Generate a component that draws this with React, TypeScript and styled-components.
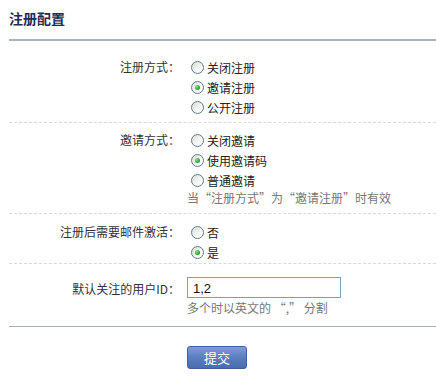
import styled, { createGlobalStyle } from "styled-components";

const GlobalStyle = createGlobalStyle`
  body {
    margin: 0;
    background: #fff;
    font-family: "Noto Sans CJK SC", "Noto Sans", sans-serif;
    font-size: 12px;
    color: #333;
  }
`;

interface IOption {
  label: string;
  checked?: boolean;
}

const regOptions: IOption[] = [
  { label: "关闭注册" },
  { label: "邀请注册", checked: true },
  { label: "公开注册" },
];

const inviteOptions: IOption[] = [
  { label: "关闭邀请" },
  { label: "使用邀请码", checked: true },
  { label: "普通邀请" },
];

const mailOptions: IOption[] = [{ label: "否" }, { label: "是", checked: true }];

const RadioGroup = ({ options }: { options: IOption[] }) => (
  <div>
    {options.map((o) => (
      <RadioRow key={o.label}>
        <RadioCircle $checked={!!o.checked} />
        {o.label}
      </RadioRow>
    ))}
  </div>
);

export default function App() {
  return (
    <Page lang="zh-CN">
      <GlobalStyle />
      <Title>注册配置</Title>
      <Section $top={16} $bottom={5}>
        <Label>注册方式：</Label>
        <RadioGroup options={regOptions} />
      </Section>
      <Section $top={7} $bottom={7}>
        <Label>邀请方式：</Label>
        <div>
          <RadioGroup options={inviteOptions} />
          <Note>当“注册方式”为“邀请注册”时有效</Note>
        </div>
      </Section>
      <Section $top={8} $bottom={1}>
        <Label>注册后需要邮件激活：</Label>
        <RadioGroup options={mailOptions} />
      </Section>
      <Section $top={13} $bottom={10} $last>
        <Label $tall>默认关注的用户ID：</Label>
        <div>
          <TextInput defaultValue="1,2" />
          <Note>多个时以英文的 “,” 分割</Note>
        </div>
      </Section>
      <Actions>
        <SubmitButton type="button">提交</SubmitButton>
      </Actions>
    </Page>
  );
}

const Page = styled.div`
  width: 427px;
  padding: 10px 0 0 9px;
`;

const Title = styled.div`
  font-size: 14px;
  font-weight: bold;
  line-height: 16px;
  color: #1f2d52;
  padding-bottom: 13px;
  border-bottom: 2px solid #a3b3c1;
`;

const Section = styled.div<{ $top: number; $bottom: number; $last?: boolean }>`
  display: grid;
  grid-template-columns: 171px 1fr;
  column-gap: 10px;
  padding: ${(p) => p.$top}px 0 ${(p) => p.$bottom}px;
  border-bottom: ${(p) => (p.$last ? "1px solid #a5adb5" : "1px dashed #d8d8d8")};
`;

const Label = styled.div<{ $tall?: boolean }>`
  text-align: right;
  line-height: ${(p) => (p.$tall ? "21px" : "18px")};
  margin-top: 1px;
  color: #333;
`;

const RadioRow = styled.div`
  display: flex;
  align-items: center;
  height: 20px;
  padding-left: 1px;
  color: #222;
`;

const RadioCircle = styled.span<{ $checked: boolean }>`
  position: relative;
  width: 11px;
  height: 11px;
  margin-right: 3px;
  border: 1px solid #5f7a96;
  border-radius: 50%;
  background: linear-gradient(135deg, #dcdcd6 0%, #f6f6f3 60%, #ffffff 100%);
  flex-shrink: 0;

  &::after {
    content: "";
    display: ${(p) => (p.$checked ? "block" : "none")};
    position: absolute;
    left: 3px;
    top: 3px;
    width: 5px;
    height: 5px;
    border-radius: 50%;
    background: radial-gradient(circle at 35% 35%, #8fe08f 0%, #2ea62e 60%, #1e8a1e 100%);
  }
`;

const Note = styled.div`
  line-height: 16px;
  color: #777;
  margin-left: -3px;
  white-space: nowrap;
`;

const TextInput = styled.input`
  display: block;
  box-sizing: border-box;
  width: 154px;
  height: 21px;
  margin: 0 0 2px -3px;
  padding: 1px 5px 0;
  border: 1px solid #7f9db9;
  font-family: "Liberation Sans", Arial, sans-serif;
  font-size: 13px;
  color: #111;
  outline: none;
`;

const Actions = styled.div`
  padding: 19px 0 0 178px;
`;

const SubmitButton = styled.button`
  width: 60px;
  height: 23px;
  padding: 0;
  border: 1px solid #41609b;
  border-radius: 3px;
  background: linear-gradient(to bottom, #7d9dd6 0%, #5a7ec2 50%, #4b6cae 100%);
  color: #fff;
  font-family: "Noto Sans CJK SC", sans-serif;
  font-size: 13px;
  line-height: 21px;
  cursor: pointer;
`;
